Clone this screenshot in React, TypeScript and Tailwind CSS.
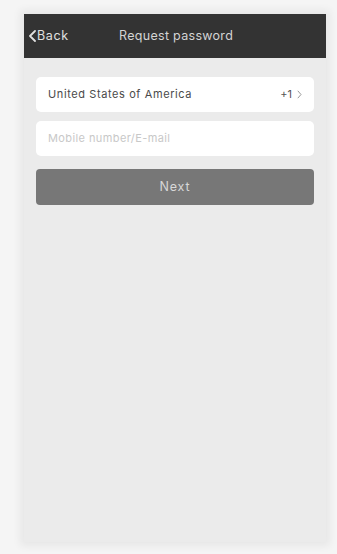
import React from "react";

export default function App() {
  return (
    <div
      className="w-[337px] h-[554px] bg-[#f5f5f5] pt-[14px] pl-[24px] overflow-hidden"
      style={{ fontFamily: "Inter, 'Open Sans', sans-serif" }}
    >
      <div className="w-[302px] h-[528px] bg-[#ebebeb] flex flex-col shadow-[0_0_8px_4px_rgba(0,0,0,0.06)]">
        <div className="h-[44px] bg-[#333333] flex items-center relative">
          <div className="flex items-center pl-[5px] text-[#e0e0e0] text-[12.5px] tracking-[0.6px]">
            <svg width="7" height="12" viewBox="0 0 7 12" className="mr-[1px]">
              <path d="M6 1 L1 6 L6 11" stroke="#e0e0e0" strokeWidth="1.8" fill="none" strokeLinecap="round" strokeLinejoin="round" />
            </svg>
            <span>Back</span>
          </div>
          <div className="absolute left-[95px] text-[#d4d4d4] text-[12.5px] tracking-[0.3px]">Request password</div>
        </div>
        <div className="px-[12px] pt-[19px] flex flex-col">
          <div className="h-[35px] bg-white rounded-[5px] flex items-center justify-between px-[12px] text-[11px] text-[#4a4a4a] tracking-[0.6px]">
            <span>United States of America</span>
            <span className="flex items-center gap-[5px] text-[#555] tracking-normal">
              +1
              <svg width="5" height="9" viewBox="0 0 5 9">
                <path d="M0.8 0.8 L4 4.5 L0.8 8.2" stroke="#999" strokeWidth="1" fill="none" />
              </svg>
            </span>
          </div>
          <div className="h-[35px] bg-white rounded-[5px] flex items-center px-[12px] text-[11px] text-[#c8c8c8] tracking-[0.4px] mt-[9px]">
            Mobile number/E-mail
          </div>
          <div className="h-[36px] bg-[#777777] rounded-[4px] flex items-center justify-center text-[12.5px] text-[#d8d8d8] tracking-[0.8px] mt-[13px]">
            Next
          </div>
        </div>
      </div>
    </div>
  );
}
